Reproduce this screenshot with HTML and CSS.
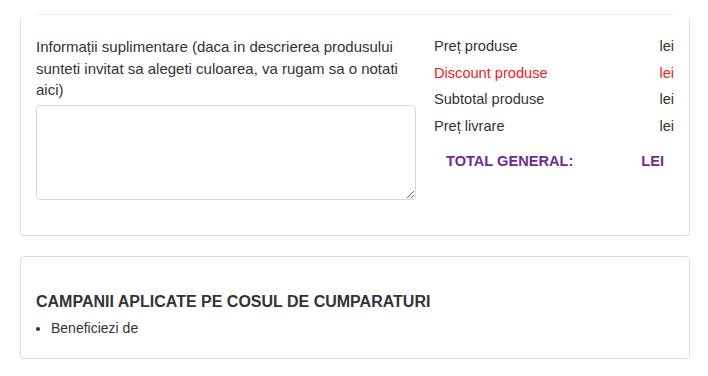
FILE: index.html
```
<!DOCTYPE html>
<html lang="ro">
<head>
<meta charset="utf-8">
<link rel="stylesheet" href="styles.css">
</head>
<body>
<div class="page">
  <div class="rule"></div>
  <div class="panel panel-top">
    <div class="cols">
      <div class="left">
        <p class="label">Informații suplimentare (daca in descrierea produsului sunteti invitat sa alegeti culoarea, va rugam sa o notati aici)</p>
        <textarea class="notes"></textarea>
      </div>
      <div class="right">
        <div class="row"><span>Preț produse</span><span>lei</span></div>
        <div class="row red"><span>Discount produse</span><span>lei</span></div>
        <div class="row"><span>Subtotal produse</span><span>lei</span></div>
        <div class="row"><span>Preț livrare</span><span>lei</span></div>
        <div class="total"><span>TOTAL GENERAL:</span><span>LEI</span></div>
      </div>
    </div>
  </div>
  <div class="panel panel-bottom">
    <h3 class="heading">CAMPANII APLICATE PE COSUL DE CUMPARATURI</h3>
    <ul class="list"><li>Beneficiezi de</li></ul>
  </div>
</div>
</body>
</html>
```
FILE: styles.css
```
html, body { margin: 0; padding: 0; background: #fff; }
body { font-family: "Liberation Sans", Arial, sans-serif; font-size: 14px; color: #333; }
.page { padding: 0 18px 0 20px; width: 670px; }
.rule { height: 1px; background: #eee; margin: 14px 17px 0 16px; }
.panel { border: 1px solid #ddd; border-radius: 4px; background: #fff; box-sizing: border-box; }
.panel-top { border-top: none; border-top-left-radius: 0; border-top-right-radius: 0; margin-top: 4px; height: 217px; padding: 17px 15px 0 15px; }
.cols { display: flex; gap: 18px; }
.left { width: 380px; }
.label { margin: 0; font-size: 15px; line-height: 21.5px; }
.notes { display: block; width: 380px; height: 95px; box-sizing: border-box; border: 1px solid #d5d5d5; border-radius: 4px; margin-top: 4px; resize: vertical; font: inherit; }
.right { width: 240px; font-size: 14.6px; }
.row { display: flex; justify-content: space-between; height: 26.67px; line-height: 20px; }
.row.red { color: #ed1c24; }
.total { display: flex; justify-content: space-between; padding: 8px 10px 0 12px; font-weight: bold; color: #6f2c91; line-height: 21px; }
.panel-bottom { margin-top: 20px; height: 103px; padding: 34px 15px 0 15px; }
.heading { margin: 0; font-size: 16px; font-weight: bold; line-height: 22px; color: #333; }
.list { margin: 5px 0 0 0; padding-left: 15px; line-height: 20px; }
```
